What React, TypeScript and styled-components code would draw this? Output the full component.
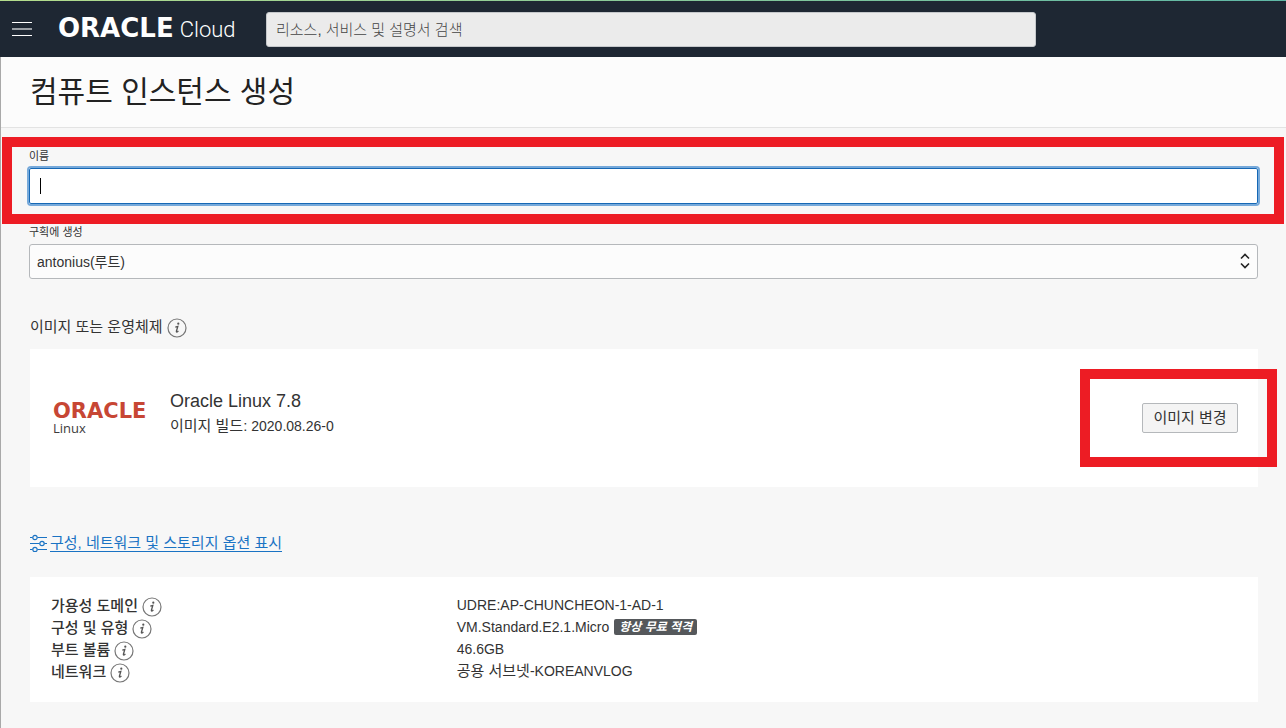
import React from 'react';
import styled, { createGlobalStyle } from 'styled-components';

const sans = '"Liberation Sans", "Noto Sans CJK KR", sans-serif';

const GlobalStyle = createGlobalStyle`
  *, *::before, *::after { box-sizing: border-box; }
  body {
    margin: 0;
    background: #f7f7f7;
    color: #333;
    font-family: ${sans};
    font-size: 14px;
  }
  #root { min-height: 100vh; display: flex; flex-direction: column; }
  input, select, button { font-family: inherit; color: inherit; margin: 0; }
`;

const AccentLine = styled.div`
  height: 1px;
  background: linear-gradient(90deg, #b4dc8c, #5fb7a6);
`;

const Header = styled.header`
  display: flex;
  align-items: center;
  height: 56px;
  padding: 0 12px;
  background: #1e2733;
`;

const MenuButton = styled.button`
  display: flex;
  padding: 0;
  border: 0;
  background: none;
  cursor: pointer;
`;

const Brand = styled.a`
  display: flex;
  align-items: baseline;
  gap: 6px;
  width: 180px;
  margin: 0 28px 0 26px;
  color: #fff;
  text-decoration: none;
  line-height: 28px;
`;

const Wordmark = styled.span<{ $size: number }>`
  font-family: "DejaVu Sans", sans-serif;
  font-weight: 700;
  font-size: ${(p) => p.$size}px;
`;

const Product = styled.span`
  font-family: Roboto, sans-serif;
  font-weight: 300;
  font-size: 22px;
`;

const Search = styled.input`
  flex: 0 1 770px;
  min-width: 0;
  height: 35px;
  padding: 0 9px;
  border: 1px solid #c5c8cb;
  border-radius: 3px;
  background: #ebebeb;
  font-size: 15px;
  font-weight: 300;
  &::placeholder { color: #444; opacity: 1; }
`;

const Page = styled.div`
  flex: 1;
  border-left: 1px solid #a9a9a9;
`;

const TitleBar = styled.div`
  height: 71px;
  padding: 12px 29px;
  border-bottom: 1px solid #e3e3e3;
  background: #fcfcfc;
`;

const Title = styled.h1`
  margin: 0;
  color: #222;
  font-size: 30px;
  line-height: 46px;
  font-weight: 400;
`;

const Form = styled.main`
  padding: 20px 28px 26px;
`;

const Field = styled.div`
  position: relative;
  display: flex;
  flex-direction: column;
`;

const NameField = styled(Field)`
  margin-bottom: 20px;
`;

const Label = styled.label`
  font-size: 11px;
  line-height: 16px;
`;

const NameInput = styled.input`
  height: 36px;
  margin-top: 4px;
  padding: 0 10px;
  border: 1px solid #1668b5;
  border-radius: 2px;
  outline: 2px solid #76a9da;
  background: #fff;
  font-size: 14px;
`;

const Caret = styled.span`
  position: absolute;
  left: 11px;
  bottom: 10px;
  width: 1px;
  height: 16px;
  background: #000;
`;

const Highlight = styled.div<{ $inset: string }>`
  position: absolute;
  inset: ${(p) => p.$inset};
  border: 10px solid #ed1c24;
  pointer-events: none;
`;

const Select = styled.select`
  appearance: none;
  width: 100%;
  height: 35px;
  margin-top: 4px;
  padding: 0 7px;
  border: 1px solid #b5b8bb;
  border-radius: 3px;
  background: #fcfcfc;
  font-size: 14px;
`;

const SelectArrows = styled.svg`
  position: absolute;
  right: 8px;
  bottom: 10px;
  pointer-events: none;
`;

const SectionTitle = styled.h2`
  display: flex;
  align-items: center;
  gap: 4px;
  margin: 37px 0 12px 1px;
  font-size: 15px;
  line-height: 21px;
  font-weight: 400;
`;

const Card = styled.section`
  position: relative;
  margin-left: 1px;
  background: #fff;
`;

const ImageCard = styled(Card)`
  display: flex;
  align-items: center;
  min-height: 138px;
  padding: 0 20px 0 23px;
`;

const ImageLogo = styled.div`
  display: flex;
  flex-direction: column;
  width: 117px;
  color: #c74634;
`;

const LogoCaption = styled.span`
  color: #3c3c3c;
  font-family: "Open Sans", sans-serif;
  font-size: 13px;
  line-height: 14px;
`;

const LogoWord = styled(Wordmark)`
  line-height: 20px;
`;

const ImageInfo = styled.div`
  flex: 1;
  margin-bottom: 10px;
`;

const ImageName = styled.div`
  font-size: 18px;
  line-height: 26px;
`;

const ImageBuild = styled.div`
  line-height: 24px;
`;

const Hangul = styled.span`
  font-size: 15px;
`;

const ButtonWrap = styled.div`
  position: relative;
`;

const Button = styled.button`
  display: block;
  min-width: 96px;
  height: 30px;
  padding: 0 10px;
  border: 1px solid #b5b8bb;
  border-radius: 2px;
  background: #f4f4f4;
  font-size: 15px;
  line-height: 26px;
  cursor: pointer;
`;

const OptionsLink = styled.a`
  display: flex;
  align-items: center;
  gap: 2px;
  width: max-content;
  margin: 44px 0 22px 1px;
  color: #1a73c4;
  font-size: 15px;
  line-height: 24px;
  text-underline-offset: 3px;
`;

const Summary = styled.dl`
  display: grid;
  grid-template-columns: 13fr 25fr;
  grid-auto-rows: 22px;
  margin: 0;
  padding: 18px 21px 19px;
`;

const Term = styled.dt`
  display: flex;
  align-items: center;
  gap: 4px;
  font-size: 15px;
  font-weight: 500;
  line-height: 22px;
`;

const Value = styled.dd`
  display: flex;
  align-items: center;
  margin: 0;
  height: 20px;
  line-height: 20px;
`;

const Badge = styled.span`
  margin-left: 5px;
  padding: 0 5px;
  border-radius: 2px;
  background: #55585b;
  color: #fff;
  font-size: 12px;
  line-height: 16px;
  font-weight: 700;
  font-style: italic;
`;

const InfoMark = styled.svg`
  flex: none;
  position: relative;
  top: 1px;
`;

const InfoIcon = () => (
  <InfoMark width="20" height="20" viewBox="0 0 20 20" fill="none" stroke="#777" aria-hidden="true">
    <circle cx="10" cy="10" r="9" strokeWidth="1.2" />
    <circle cx="11.3" cy="5.7" r="1.1" fill="#555" stroke="none" />
    <path d="M8.3 9.2 L10.8 8.5 L9.4 13.2 C9.2 14.4 10.2 14.2 11.4 12.9" stroke="#555" strokeWidth="1.3" />
  </InfoMark>
);

const MenuIcon = () => (
  <svg width="20" height="16" viewBox="0 0 20 16" aria-hidden="true">
    <path d="M0 1.5H20M0 14.5H20" stroke="#fff" />
    <path d="M0 8H20" stroke="#9a9fa5" strokeWidth="2" />
  </svg>
);

const SlidersIcon = () => (
  <svg width="18" height="18" viewBox="0 0 18 18" fill="none" stroke="#1a73c4" strokeWidth="1.2" aria-hidden="true">
    <path d="M0 3.5H2.5M7.5 3.5H17M0 9.5H9.5M14.5 9.5H17M0 15.5H2.5M7.5 15.5H17" />
    <circle cx="5" cy="3.5" r="2.2" />
    <circle cx="12" cy="9.5" r="2.2" />
    <circle cx="5" cy="15.5" r="2.2" />
  </svg>
);

const summary: { term: string; value: React.ReactNode }[] = [
  { term: '가용성 도메인', value: 'UDRE:AP-CHUNCHEON-1-AD-1' },
  { term: '구성 및 유형', value: <>VM.Standard.E2.1.Micro<Badge>항상 무료 적격</Badge></> },
  { term: '부트 볼륨', value: '46.6GB' },
  { term: '네트워크', value: <span><Hangul>공용 서브넷</Hangul>-KOREANVLOG</span> },
];

export default function App() {
  return (
    <>
      <GlobalStyle />
      <AccentLine />
      <Header>
        <MenuButton type="button" aria-label="메뉴"><MenuIcon /></MenuButton>
        <Brand href="#">
          <Wordmark $size={26}>ORACLE</Wordmark>
          <Product>Cloud</Product>
        </Brand>
        <Search type="search" aria-label="검색" placeholder="리소스, 서비스 및 설명서 검색" />
      </Header>
      <Page>
        <TitleBar><Title>컴퓨트 인스턴스 생성</Title></TitleBar>
        <Form>
          <NameField>
            <Label htmlFor="name">이름</Label>
            <NameInput id="name" type="text" />
            <Caret />
            <Highlight $inset="-11px -26px -20px -27px" />
          </NameField>
          <Field>
            <Label htmlFor="compartment">구획에 생성</Label>
            <Select id="compartment" defaultValue="root">
              <option value="root">antonius(루트)</option>
            </Select>
            <SelectArrows width="10" height="16" viewBox="0 0 10 16" fill="none" stroke="#222" strokeWidth="1.6" aria-hidden="true">
              <path d="M1 5.5L5 1.5L9 5.5M1 10.5L5 14.5L9 10.5" />
            </SelectArrows>
          </Field>
          <SectionTitle>이미지 또는 운영체제<InfoIcon /></SectionTitle>
          <ImageCard>
            <ImageLogo>
              <LogoWord $size={21}>ORACLE</LogoWord>
              <LogoCaption>Linux</LogoCaption>
            </ImageLogo>
            <ImageInfo>
              <ImageName>Oracle Linux 7.8</ImageName>
              <ImageBuild><Hangul>이미지 빌드:</Hangul> 2020.08.26-0</ImageBuild>
            </ImageInfo>
            <ButtonWrap>
              <Button type="button">이미지 변경</Button>
              <Highlight $inset="-34px -39px -34px -62px" />
            </ButtonWrap>
          </ImageCard>
          <OptionsLink href="#"><SlidersIcon />구성, 네트워크 및 스토리지 옵션 표시</OptionsLink>
          <Card>
            <Summary>
              {summary.map((row) => (
                <React.Fragment key={row.term}>
                  <Term>{row.term}<InfoIcon /></Term>
                  <Value>{row.value}</Value>
                </React.Fragment>
              ))}
            </Summary>
          </Card>
        </Form>
      </Page>
    </>
  );
}
